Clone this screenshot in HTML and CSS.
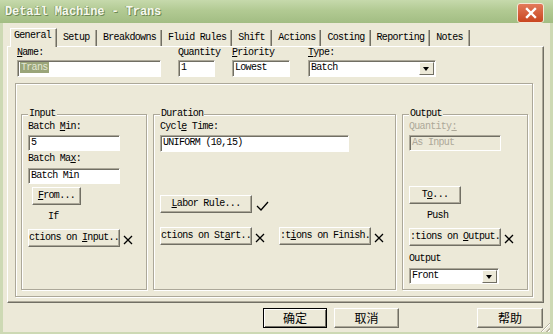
FILE: index.html
```html
<!DOCTYPE html>
<html lang="en">
<head>
    <meta charset="UTF-8">
    <title>Detail Machine - Trans</title>
    <link rel="stylesheet" href="styles.css">
</head>
<body>
    <div class="window">
        <div class="titlebar">
            <span class="title">Detail Machine - Trans</span>
            <div class="close-btn">
                <svg width="12" height="12" viewBox="0 0 12 12"><path d="M2 2L10 10M10 2L2 10" stroke="#fff" stroke-width="2.4" stroke-linecap="square"/></svg>
            </div>
        </div>

        <div class="client">
            <div class="tabs">
                <div class="tab active">General</div>
                <div class="tab">Setup</div>
                <div class="tab">Breakdowns</div>
                <div class="tab">Fluid Rules</div>
                <div class="tab">Shift</div>
                <div class="tab">Actions</div>
                <div class="tab">Costing</div>
                <div class="tab">Reporting</div>
                <div class="tab">Notes</div>
            </div>

            <div class="page">
                <div class="fields">
                    <div class="field f-name">
                        <label><u>N</u>ame:</label>
                        <div class="input"><span class="sel">Trans</span></div>
                    </div>
                    <div class="field f-qty">
                        <label>Quantity</label>
                        <div class="input">1</div>
                    </div>
                    <div class="field f-prio">
                        <label><u>P</u>riority</label>
                        <div class="input">Lowest</div>
                    </div>
                    <div class="field f-type">
                        <label><u>T</u>ype:</label>
                        <div class="input select">Batch<span class="arrow"></span></div>
                    </div>
                </div>

                <div class="panel">
                    <!-- Input -->
                    <div class="group">
                        <div class="legend">Input</div>
                        <div class="lbl">Batch <u>M</u>in:</div>
                        <div class="input w92">5</div>
                        <div class="lbl lbl-max">Batch Ma<u>x</u>:</div>
                        <div class="input w92 in-max">Batch Min</div>
                        <div class="btn btn-from"><u>F</u>rom...</div>
                        <div class="note note-if">If</div>
                        <div class="btn-row">
                            <div class="btn w92">ctions on <u>I</u>nput..</div>
                            <svg class="mark" width="10" height="10" viewBox="0 0 10 10"><path d="M1 1L9 9M9 1L1 9" stroke="#000" stroke-width="1.3"/></svg>
                        </div>
                    </div>

                    <!-- Duration -->
                    <div class="group">
                        <div class="legend">Duration</div>
                        <div class="lbl">Cycl<u>e</u> Time:</div>
                        <div class="input w189">UNIFORM (10,15)</div>
                        <div class="btn-row row-labor">
                            <div class="btn w92"><u>L</u>abor Rule...</div>
                            <svg class="mark check" width="13" height="10" viewBox="0 0 13 10"><path d="M1 5L5 9L12 1" stroke="#000" stroke-width="1.3" fill="none"/></svg>
                        </div>
                        <div class="btn-row">
                            <div class="btn w92">ctions on St<u>a</u>rt..</div>
                            <svg class="mark" width="10" height="10" viewBox="0 0 10 10"><path d="M1 1L9 9M9 1L1 9" stroke="#000" stroke-width="1.3"/></svg>
                            <div class="btn w92 btn-finish">:t<u>i</u>ons on Finish.</div>
                            <svg class="mark" width="10" height="10" viewBox="0 0 10 10"><path d="M1 1L9 9M9 1L1 9" stroke="#000" stroke-width="1.3"/></svg>
                        </div>
                    </div>

                    <!-- Output -->
                    <div class="group">
                        <div class="legend">Output</div>
                        <div class="lbl disabled">Quantity<u>:</u></div>
                        <div class="input w92 input-disabled">As Input</div>
                        <div class="btn btn-to">T<u>o</u>...</div>
                        <div class="note note-push">Push</div>
                        <div class="btn-row">
                            <div class="btn w92">:tions on <u>O</u>utput.</div>
                            <svg class="mark" width="10" height="10" viewBox="0 0 10 10"><path d="M1 1L9 9M9 1L1 9" stroke="#000" stroke-width="1.3"/></svg>
                        </div>
                        <div class="lbl lbl-output">Output</div>
                        <div class="input select w90">Front<span class="arrow"></span></div>
                    </div>
                </div>
            </div>

            <div class="actions">
                <div class="btn dlg default">确定</div>
                <div class="btn dlg">取消</div>
                <div class="btn dlg help">帮助</div>
            </div>
            <div class="grip"></div>
        </div>
    </div>
</body>
</html>
```

FILE: styles.css
```css
:root {
    --face: #ece9d8;
    --shadow: #aca899;
    --dark: #716f64;
    --frame: #a9c38a;
}

* {
    box-sizing: border-box;
    margin: 0;
    padding: 0;
}

body {
    width: 553px;
    height: 334px;
    overflow: hidden;
    background: var(--face);
    font-family: "Liberation Mono", "DejaVu Sans Mono", monospace;
    font-size: 10px;
    letter-spacing: -0.7px;
    color: #000;
}

u {
    text-decoration: underline;
    text-underline-offset: 1px;
}

.window {
    width: 553px;
    height: 334px;
    display: flex;
    flex-direction: column;
}

/* 标题栏 */
.titlebar {
    height: 23px;
    flex-shrink: 0;
    display: flex;
    align-items: center;
    justify-content: space-between;
    padding: 0 9px 0 5px;
    background: linear-gradient(to bottom, #c6d9ac 0%, #b2ca93 45%, #a2bd83 100%);
}

.title {
    font-size: 12px;
    font-weight: bold;
    letter-spacing: -0.1px;
    color: #f6f8ee;
    text-shadow: 1px 1px 0 #6f8a55, -1px 0 0 #8fa872;
}

.close-btn {
    width: 27px;
    height: 20px;
    margin-top: 2px;
    display: flex;
    align-items: center;
    justify-content: center;
    border: 1px solid #f4e6d6;
    border-radius: 3px;
    background: linear-gradient(to bottom, #e27a5a, #c9461f);
}

/* 客户区 */
.client {
    flex: 1;
    position: relative;
    background: var(--face);
    border-left: 3px solid #cdd9b4;
    border-right: 3px solid #cdd9b4;
    border-bottom: 2px solid #cdd9b4;
    padding-top: 5px;
}

.tabs {
    display: flex;
    height: 18px;
    padding-left: 7px;
    align-items: flex-end;
}

.tab {
    height: 16px;
    min-width: 40px;
    padding: 0 5px 0 6px;
    line-height: 15px;
    border-right: 1px solid var(--dark);
    box-shadow: inset -1px 0 0 var(--shadow);
    white-space: nowrap;
}

.tab.active {
    width: 47px;
    height: 19px;
    margin-bottom: -1px;
    padding-left: 3px;
    line-height: 13px;
    background: var(--face);
    border-top: 1px solid #fff;
    border-left: 1px solid #fff;
    position: relative;
    z-index: 1;
}

.page {
    margin-left: 4px;
    width: 537px;
    height: 257px;
    border-top: 1px solid #fff;
    border-left: 1px solid #fff;
    border-right: 1px solid var(--dark);
    border-bottom: 1px solid var(--dark);
    box-shadow: inset -1px -1px 0 var(--shadow);
}

.fields {
    display: flex;
    gap: 17px;
    padding-left: 9px;
}

.field label {
    display: block;
    height: 13px;
    line-height: 12px;
    white-space: nowrap;
}

.f-name { width: 144px; }
.f-qty { width: 37px; }
.f-prio { width: 58px; margin-right: 1px; }
.f-type { width: 128px; }

.input {
    position: relative;
    height: 17px;
    line-height: 14px;
    padding-left: 2px;
    background: #fff;
    border-top: 1px solid var(--shadow);
    border-left: 1px solid var(--shadow);
    border-right: 1px solid #fff;
    border-bottom: 1px solid #fff;
    box-shadow: inset 1px 1px 0 var(--dark);
    white-space: nowrap;
    overflow: hidden;
}

.sel {
    background: #9aa57a;
    color: #e4e8d4;
    padding: 0 1px;
}

.arrow {
    position: absolute;
    right: 1px;
    top: 1px;
    width: 15px;
    height: 13px;
    background: var(--face);
    border-top: 1px solid #fff;
    border-left: 1px solid #fff;
    border-right: 1px solid var(--dark);
    border-bottom: 1px solid var(--dark);
}

.arrow::after {
    content: "";
    position: absolute;
    left: 3px;
    top: 4px;
    border-left: 3.5px solid transparent;
    border-right: 3.5px solid transparent;
    border-top: 4px solid #000;
}

/* 分组面板 */
.panel {
    margin: 6px 10px 0 7px;
    height: 214px;
    padding: 30px 4px 0 5px;
    border: 1px solid var(--shadow);
    box-shadow: inset 1px 1px 0 #fff, 1px 1px 0 #fff;
    display: grid;
    grid-template-columns: 126px 243px 1fr;
    column-gap: 6px;
}

.group {
    height: 176px;
    padding-left: 6px;
    border: 1px solid var(--shadow);
    box-shadow: inset 1px 1px 0 #fff, 1px 1px 0 #fff;
}

.legend {
    width: fit-content;
    height: 12px;
    line-height: 12px;
    margin: -7px 0 0 0;
    padding: 0 1px;
    background: var(--face);
}

.lbl {
    height: 12px;
    line-height: 12px;
    margin-top: 1px;
}

.lbl + .input {
    margin-top: 2px;
    height: 16px;
}

.lbl-max { margin-top: 2px; }
.lbl-max + .input { margin-top: 3px; }

.w92 { width: 92px; }
.w189 { width: 189px; }
.w90 { width: 90px; }

.group .w189 { height: 17px; }

.disabled {
    color: #aca899;
}

.input-disabled {
    background: var(--face);
    color: #aca899;
}

.btn {
    height: 18px;
    line-height: 16px;
    text-align: center;
    white-space: nowrap;
    overflow: hidden;
    background: var(--face);
    border-top: 1px solid #fff;
    border-left: 1px solid #fff;
    border-right: 1px solid var(--dark);
    border-bottom: 1px solid var(--dark);
    box-shadow: inset -1px -1px 0 var(--shadow);
}

.btn-from {
    width: 49px;
    margin: 3px 0 0 4px;
}

.btn-to {
    width: 52px;
    margin-top: 35px;
}

.note {
    height: 12px;
    line-height: 12px;
    margin-top: 6px;
}

.note-if { padding-left: 20px; }
.note-push { padding-left: 18px; }

.btn-row {
    display: flex;
    align-items: center;
    gap: 3px;
    margin-top: 6px;
}

.btn-row .mark {
    margin-top: 4px;
}

.row-labor {
    margin-top: 43px;
}

.row-labor + .btn-row {
    margin-top: 14px;
}

.check {
    margin-left: 1px;
}

.btn-finish {
    margin-left: 11px;
}

.lbl-output {
    margin-top: 7px;
}

.lbl-output + .input {
    margin-top: 3px;
    height: 16px;
}

/* 底部按钮 */
.actions {
    display: flex;
    gap: 7px;
    margin-top: 5px;
    padding: 0 7px 0 260px;
}

.btn.dlg {
    width: 65px;
    height: 20px;
    line-height: 17px;
    font-family: "Noto Sans CJK SC", sans-serif;
    font-size: 12px;
    letter-spacing: 0;
}

.btn.dlg.default {
    width: 64px;
    border: 1px solid #000;
    box-shadow: inset 1px 1px 0 #fff, inset -1px -1px 0 var(--dark);
}

.btn.dlg.help {
    margin-left: auto;
    width: 66px;
}

.grip {
    position: absolute;
    right: 0;
    bottom: 0;
    width: 12px;
    height: 12px;
    background: repeating-linear-gradient(135deg, transparent 0 2px, #b8b4a0 2px 3px, #fff 3px 4px);
    clip-path: polygon(100% 0, 100% 100%, 0 100%);
}
```
